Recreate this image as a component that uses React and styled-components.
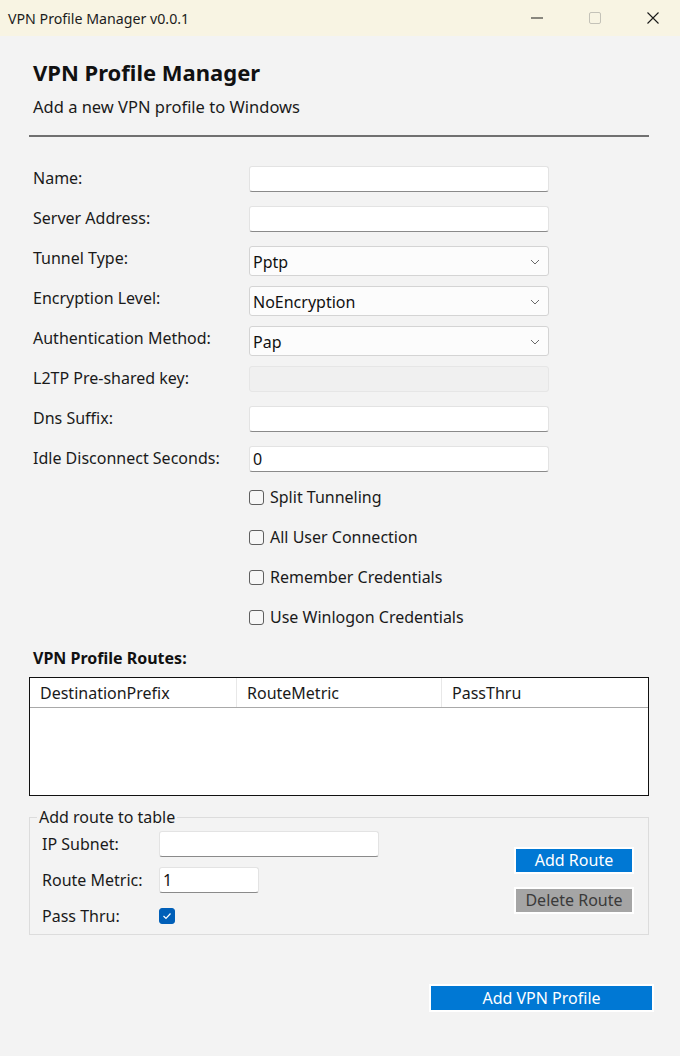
import React from 'react';
import styled, { createGlobalStyle } from 'styled-components';

const FONT = `"Noto Sans", "Open Sans", "DejaVu Sans", sans-serif`;

const GlobalStyle = createGlobalStyle`
  html, body {
    margin: 0;
    padding: 0;
    background: #f3f3f3;
    font-family: ${FONT};
    color: #1a1a1a;
  }
  * { box-sizing: border-box; }
`;

const Window = styled.div`
  width: 680px;
  height: 1056px;
  overflow: hidden;
  display: flex;
  flex-direction: column;
  background: #f3f3f3;
`;

const TitleBar = styled.div`
  height: 36px;
  flex: none;
  display: flex;
  align-items: center;
  background: #f8f4e3;
  padding-left: 8px;
`;

const TitleText = styled.div`
  flex: 1;
  font-size: 14.2px;
  color: #1c1c1c;
`;

const Controls = styled.div`
  display: flex;
  margin-right: -2px;
`;

const CaptionButton = styled.div`
  width: 58px;
  height: 36px;
  display: flex;
  align-items: center;
  justify-content: center;
`;

const Content = styled.div`
  flex: 1;
  display: flex;
  flex-direction: column;
  padding: 0 31px 0 29px;
`;

const Header = styled.div`
  padding-left: 4px;
  margin-top: 22px;
`;

const Heading = styled.h1`
  margin: 0;
  font-size: 22px;
  line-height: 28px;
  font-weight: 700;
  color: #111;
`;

const Subtitle = styled.div`
  margin-top: 10px;
  font-size: 16.5px;
  line-height: 22px;
`;

const Separator = styled.div`
  margin-top: 17px;
  height: 2px;
  background: #707070;
`;

const Form = styled.div`
  margin-top: 29px;
  padding-left: 4px;
  display: grid;
  grid-template-columns: 216px 300px;
  grid-auto-rows: 40px;
  align-items: start;
`;

const Label = styled.div`
  font-size: 16px;
  line-height: 24px;
  color: #1a1a1a;
  white-space: nowrap;
`;

const TextBox = styled.div`
  height: 26px;
  width: ${p => p.$width || '100%'};
  background: ${p => (p.$disabled ? '#f0f0f0' : '#ffffff')};
  border: 1px solid ${p => (p.$disabled ? '#e6e6e6' : '#e3e3e3')};
  border-bottom-color: ${p => (p.$disabled ? '#e6e6e6' : '#8a8a8a')};
  border-radius: 3px;
  padding-left: 3px;
  font-size: 16px;
  line-height: 25px;
  color: #111;
`;

const Combo = styled.div`
  height: 30px;
  background: #fcfcfc;
  border: 1px solid #d4d4d4;
  border-radius: 3px;
  display: flex;
  align-items: center;
  justify-content: space-between;
  padding: 2px 8px 0 3px;
  font-size: 16px;
  color: #111;
`;

const CheckRow = styled.label`
  grid-column: 2;
  display: flex;
  align-items: center;
  gap: 6px;
  height: 22px;
  font-size: 16px;
  color: #1a1a1a;
`;

const Box = styled.span`
  width: ${p => p.$size || 15}px;
  height: ${p => p.$size || 15}px;
  flex: none;
  border-radius: 3px;
  border: 1px solid ${p => (p.$checked ? '#005fb8' : '#5f5f5f')};
  background: ${p => (p.$checked ? '#005fb8' : '#f7f7f7')};
  display: flex;
  align-items: center;
  justify-content: center;
`;

const SectionTitle = styled.div`
  margin-top: 1px;
  padding-left: 4px;
  font-size: 16px;
  line-height: 22px;
  font-weight: 700;
  color: #111;
`;

const Table = styled.div`
  margin-top: 8px;
  height: 119px;
  border: 1px solid #111;
  background: #fff;
  display: flex;
  flex-direction: column;
`;

const HeaderRow = styled.div`
  display: grid;
  grid-template-columns: 207px 205px 1fr;
  height: 30px;
  border-bottom: 1px solid #a9a9a9;
`;

const HeaderCell = styled.div`
  padding: 0 10px;
  display: flex;
  align-items: center;
  font-size: 16px;
  color: #1a1a1a;
  border-right: ${p => (p.$last ? 'none' : '1px solid #e8e8e8')};
`;

const GroupBox = styled.fieldset`
  margin: 10px 0 0;
  padding: 3px 15px 5px 12px;
  border: 1px solid #dcdcdc;
  display: flex;
  align-items: center;
  justify-content: space-between;
  min-width: 0;
`;

const Legend = styled.legend`
  padding: 0 2px;
  margin-left: -5px;
  font-size: 16px;
  line-height: 22px;
  color: #1a1a1a;
`;

const GroupFields = styled.div`
  display: grid;
  grid-template-columns: 117px auto;
  grid-auto-rows: 26px;
  row-gap: 10px;
  align-items: center;
`;

const ButtonColumn = styled.div`
  display: flex;
  flex-direction: column;
  gap: 15px;
`;

const Button = styled.button`
  width: ${p => p.$width};
  height: ${p => p.$height || '25px'};
  border: 1px solid #ffffff;
  outline: 1px solid #ffffff;
  background: ${p => (p.$disabled ? '#a5a5a5' : '#0078d4')};
  color: ${p => (p.$disabled ? '#3a3a3a' : '#ffffff')};
  font-family: ${FONT};
  font-size: 16px;
  line-height: 20px;
  padding: 0;
  cursor: default;
`;

const Footer = styled.div`
  display: flex;
  justify-content: flex-end;
  margin-top: 50px;
  margin-right: -4px;
`;

const Chevron = () => (
  <svg width="10" height="6" viewBox="0 0 10 6">
    <polyline points="1,1 5,5 9,1" fill="none" stroke="#6a6a6a" strokeWidth="1" />
  </svg>
);

const Check = () => (
  <svg width="10" height="8" viewBox="0 0 10 8">
    <polyline points="1.5,4 4,6.5 8.5,1.5" fill="none" stroke="#ffffff" strokeWidth="1.2" />
  </svg>
);

const fields = [
  { label: 'Name:', type: 'text' },
  { label: 'Server Address:', type: 'text' },
  { label: 'Tunnel Type:', type: 'combo', value: 'Pptp' },
  { label: 'Encryption Level:', type: 'combo', value: 'NoEncryption' },
  { label: 'Authentication Method:', type: 'combo', value: 'Pap' },
  { label: 'L2TP Pre-shared key:', type: 'disabled' },
  { label: 'Dns Suffix:', type: 'text' },
  { label: 'Idle Disconnect Seconds:', type: 'text', value: '0' },
];

const checks = ['Split Tunneling', 'All User Connection', 'Remember Credentials', 'Use Winlogon Credentials'];

export default function App() {
  return (
    <>
      <GlobalStyle />
      <Window>
        <TitleBar>
          <TitleText>VPN Profile Manager v0.0.1</TitleText>
          <Controls>
            <CaptionButton>
              <svg width="12" height="2" viewBox="0 0 12 2"><rect x="0" y="0.5" width="12" height="1" fill="#1a1a1a" /></svg>
            </CaptionButton>
            <CaptionButton>
              <svg width="12" height="12" viewBox="0 0 12 12"><rect x="0.5" y="0.5" width="11" height="11" rx="1.5" fill="none" stroke="#c4c2b8" /></svg>
            </CaptionButton>
            <CaptionButton>
              <svg width="12" height="12" viewBox="0 0 12 12"><path d="M0.5 0.5 L11.5 11.5 M11.5 0.5 L0.5 11.5" stroke="#1a1a1a" strokeWidth="1.1" /></svg>
            </CaptionButton>
          </Controls>
        </TitleBar>
        <Content>
          <Header>
            <Heading>VPN Profile Manager</Heading>
            <Subtitle>Add a new VPN profile to Windows</Subtitle>
          </Header>
          <Separator />
          <Form>
            {fields.map(f => (
              <React.Fragment key={f.label}>
                <Label>{f.label}</Label>
                {f.type === 'combo' ? (
                  <Combo>
                    <span>{f.value}</span>
                    <Chevron />
                  </Combo>
                ) : (
                  <TextBox $disabled={f.type === 'disabled'}>{f.value}</TextBox>
                )}
              </React.Fragment>
            ))}
            {checks.map(c => (
              <CheckRow key={c}>
                <Box />
                {c}
              </CheckRow>
            ))}
          </Form>
          <SectionTitle>VPN Profile Routes:</SectionTitle>
          <Table>
            <HeaderRow>
              <HeaderCell>DestinationPrefix</HeaderCell>
              <HeaderCell>RouteMetric</HeaderCell>
              <HeaderCell $last>PassThru</HeaderCell>
            </HeaderRow>
          </Table>
          <GroupBox>
            <Legend>Add route to table</Legend>
            <GroupFields>
              <Label>IP Subnet:</Label>
              <TextBox $width="220px" />
              <Label>Route Metric:</Label>
              <TextBox $width="100px">1</TextBox>
              <Label>Pass Thru:</Label>
              <Box $checked $size={16}><Check /></Box>
            </GroupFields>
            <ButtonColumn>
              <Button $width="118px">Add Route</Button>
              <Button $width="118px" $disabled>Delete Route</Button>
            </ButtonColumn>
          </GroupBox>
          <Footer>
            <Button $width="223px" $height="26px">Add VPN Profile</Button>
          </Footer>
        </Content>
      </Window>
    </>
  );
}
